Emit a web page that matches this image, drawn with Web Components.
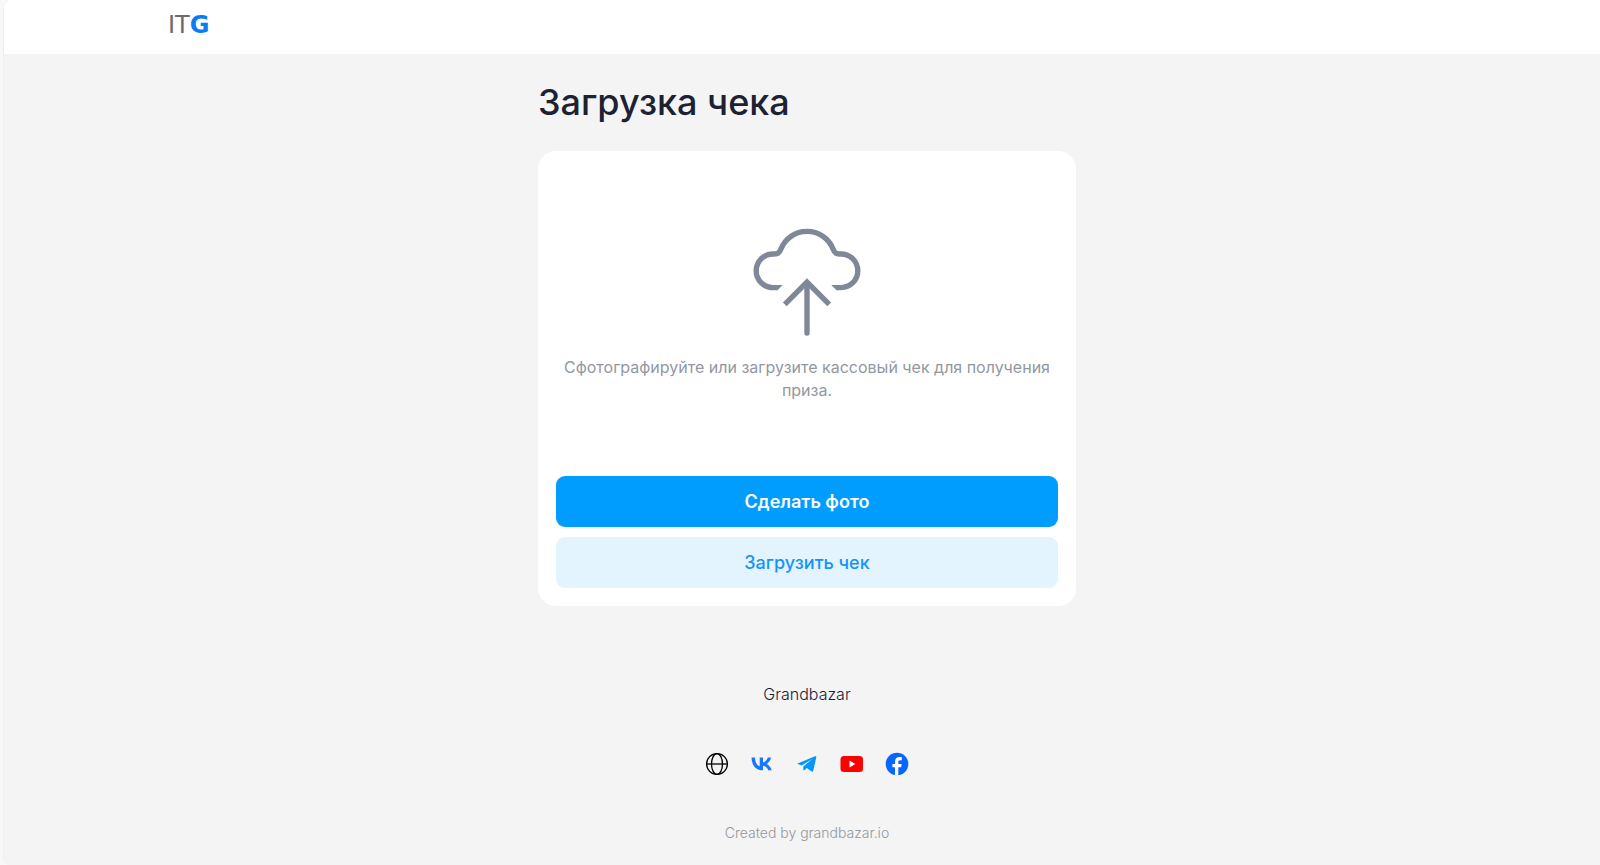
<!DOCTYPE html>
<html lang="ru">
<head>
<meta charset="utf-8">
<meta name="viewport" content="width=device-width, initial-scale=1">
<title>Загрузка чека</title>
<style>
  body {
    margin: 0;
    background: #f8f8f8;
    font-family: Inter, "Open Sans", sans-serif;
  }
</style>
</head>
<body>
<receipt-page>
  <site-header slot="header"></site-header>
  <upload-card heading="Загрузка чека">
    Сфотографируйте или загрузите кассовый чек для получения приза.
    <app-button slot="actions">Сделать фото</app-button>
    <app-button slot="actions" face="light">Загрузить чек</app-button>
  </upload-card>
  <site-footer slot="footer" name="Grandbazar">Created by grandbazar.io</site-footer>
</receipt-page>

<script>
class ReceiptPage extends HTMLElement {
  constructor() {
    super();
    this.attachShadow({ mode: "open" }).innerHTML = `
      <style>
        :host {
          display: flex;
          flex-direction: column;
          box-sizing: border-box;
          min-height: 100vh;
          margin-left: 3px;
          overflow: hidden;
          background: #f4f4f4;
          border-left: 1px solid #f0f0f0;
          border-radius: 8px 0 0 8px;
        }
        main, footer {
          padding-left: 10px;
        }
      </style>
      <slot name="header"></slot>
      <main><slot></slot></main>
      <footer><slot name="footer"></slot></footer>
    `;
  }
}

class SiteHeader extends HTMLElement {
  constructor() {
    super();
    this.attachShadow({ mode: "open" }).innerHTML = `
      <style>
        :host {
          display: block;
          background: #ffffff;
        }
        .container {
          display: flex;
          align-items: center;
          max-width: 1276px;
          height: 50px;
          margin: 0 auto;
          padding: 0 0 4px 8px;
        }
        a {
          color: #6b6b6b;
          font-family: "DejaVu Sans", sans-serif;
          font-size: 24px;
          line-height: 24px;
          text-decoration: none;
        }
        span {
          color: #0a7cf5;
          font-weight: 700;
        }
      </style>
      <header class="container">
        <a href="#">IT<span>G</span></a>
      </header>
    `;
  }
}

class UploadCard extends HTMLElement {
  constructor() {
    super();
    this.attachShadow({ mode: "open" }).innerHTML = `
      <style>
        :host {
          display: block;
          max-width: 538px;
          margin: 0 auto;
          padding-top: 24px;
        }
        h1 {
          margin: 0 0 24px;
          color: #1c2133;
          font-size: 36px;
          font-weight: 500;
          line-height: 49px;
        }
        .card {
          padding: 18px;
          background: #ffffff;
          border-radius: 18px;
        }
        .info {
          display: flex;
          flex-direction: column;
          align-items: center;
          gap: 20px;
          padding: 59px 0 74px;
        }
        svg {
          width: 108px;
          height: 108px;
        }
        p {
          margin: 0;
          color: #93979f;
          font-size: 16px;
          line-height: 23px;
          text-align: center;
        }
        .actions {
          display: flex;
          flex-direction: column;
          gap: 10px;
        }
      </style>
      <h1></h1>
      <div class="card">
        <div class="info">
          <svg viewBox="0 0 108 108" fill="none" stroke="#7e8899" stroke-width="5.4" aria-hidden="true">
            <path d="M24.500 59.600H20C10.700 59.600 3.200 52.100 3.200 42.800C3.200 33.500 10.700 26 20 26C24.600 26 26.300 25.200 28 21C32.200 10.600 42.200 3.400 54 3.400C65.800 3.400 75.800 10.600 80 21C81.700 25.200 83.400 26 88 26C97.300 26 104.800 33.500 104.800 42.800C104.800 52.100 97.300 59.600 88 59.600H83.500"/>
            <path d="M24 56.900H29.700L24.500 62.300H24ZM84 56.900H78.300L83.500 62.300H84Z" fill="#7e8899" stroke="none"/>
            <path d="M31.800 76.300L54 54L76.200 76.300"/>
            <path d="M54 56V105" stroke-linecap="round"/>
          </svg>
          <p><slot></slot></p>
        </div>
        <div class="actions"><slot name="actions"></slot></div>
      </div>
    `;
  }

  connectedCallback() {
    this.shadowRoot.querySelector("h1").textContent = this.getAttribute("heading");
  }
}

class AppButton extends HTMLElement {
  constructor() {
    super();
    this.attachShadow({ mode: "open" }).innerHTML = `
      <style>
        :host {
          display: block;
        }
        button {
          display: block;
          width: 100%;
          height: 51px;
          padding: 0 16px;
          border: none;
          border-radius: 9px;
          background: #009dff;
          color: #ffffff;
          font: inherit;
          font-size: 18px;
          font-weight: 600;
          cursor: pointer;
        }
        :host([face="light"]) button {
          background: #e3f4ff;
          color: #1494fb;
          font-weight: 500;
        }
      </style>
      <button type="button"><slot></slot></button>
    `;
  }
}

class SiteFooter extends HTMLElement {
  constructor() {
    super();
    this.attachShadow({ mode: "open" }).innerHTML = `
      <style>
        :host {
          display: flex;
          flex-direction: column;
          align-items: center;
          padding: 76px 0 20px;
          text-align: center;
        }
        .name {
          color: #1c2133;
          font-size: 16px;
          font-weight: 300;
          line-height: 24px;
        }
        nav {
          display: flex;
          gap: 21px;
          margin: 46px 0 45px;
        }
        nav a {
          display: block;
          width: 24px;
          height: 24px;
        }
        svg {
          display: block;
        }
        .created {
          color: #93979f;
          font-size: 14px;
          font-weight: 300;
          line-height: 24px;
        }
      </style>
      <div class="name"></div>
      <nav>
        <a href="#" aria-label="Website">
          <svg width="24" height="24" viewBox="0 0 24 24" fill="none" stroke="#000" stroke-width="1.300">
            <circle cx="12" cy="12" r="10.400"/>
            <ellipse cx="12" cy="12" rx="5.500" ry="10.400"/>
            <path d="M1.600 12H22.400"/>
          </svg>
        </a>
        <a href="#" aria-label="VK">
          <svg width="24" height="24" viewBox="0 0 24 24" fill="#1976ff">
            <path d="M12.700 18.300C5.800 18.300 1.700 13.400 1.500 5.500H5C5.100 11.300 7.600 13.700 9.700 14.200V5.500H13V10.500C15 10.300 17.100 8 17.800 5.500H21.100C20.500 8.600 18.300 10.900 16.700 11.900C18.300 12.700 20.800 14.700 21.800 18.300H18.200C17.400 15.900 15.500 14 13 13.800V18.300Z"/>
          </svg>
        </a>
        <a href="#" aria-label="Telegram">
          <svg width="24" height="24" viewBox="0 0 24 24" fill="#0596f8">
            <path d="M2.700 11.400L20 4.300C21.200 3.800 21.500 4.500 21.200 5.700L18.300 18.500C18 19.800 17.300 20 16.300 19.200L11.800 15.900L9.500 18.100C8.900 18.700 8.300 18.600 8.300 17.700V14.600L17.300 6.900L6.900 13.400L2.700 12.100C1.900 11.900 2 11.700 2.700 11.400Z"/>
          </svg>
        </a>
        <a href="#" aria-label="YouTube">
          <svg width="24" height="24" viewBox="0 0 24 24">
            <rect x="0.500" y="4" width="22.500" height="16" rx="3.500" fill="#ff0000"/>
            <path d="M9.500 8.600V15.400L15.300 12Z" fill="#fff"/>
          </svg>
        </a>
        <a href="#" aria-label="Facebook">
          <svg width="24" height="24" viewBox="0 0 24 24">
            <circle cx="12" cy="12" r="11.300" fill="#0866ff"/>
            <path d="M10 23.300V15.300H7.400V12H10V10C10 6.700 11.500 5 14.700 5C15.400 5 16.200 5.100 16.800 5.300V8.300H15.300C13.800 8.300 13.300 9 13.300 10.300V12H16.700L16.100 15.300H13.300V23.400Z" fill="#fff"/>
          </svg>
        </a>
      </nav>
      <div class="created"><slot></slot></div>
    `;
  }

  connectedCallback() {
    this.shadowRoot.querySelector(".name").textContent = this.getAttribute("name");
  }
}

window.customElements.define("receipt-page", ReceiptPage);
window.customElements.define("site-header", SiteHeader);
window.customElements.define("upload-card", UploadCard);
window.customElements.define("app-button", AppButton);
window.customElements.define("site-footer", SiteFooter);
</script>
</body>
</html>
